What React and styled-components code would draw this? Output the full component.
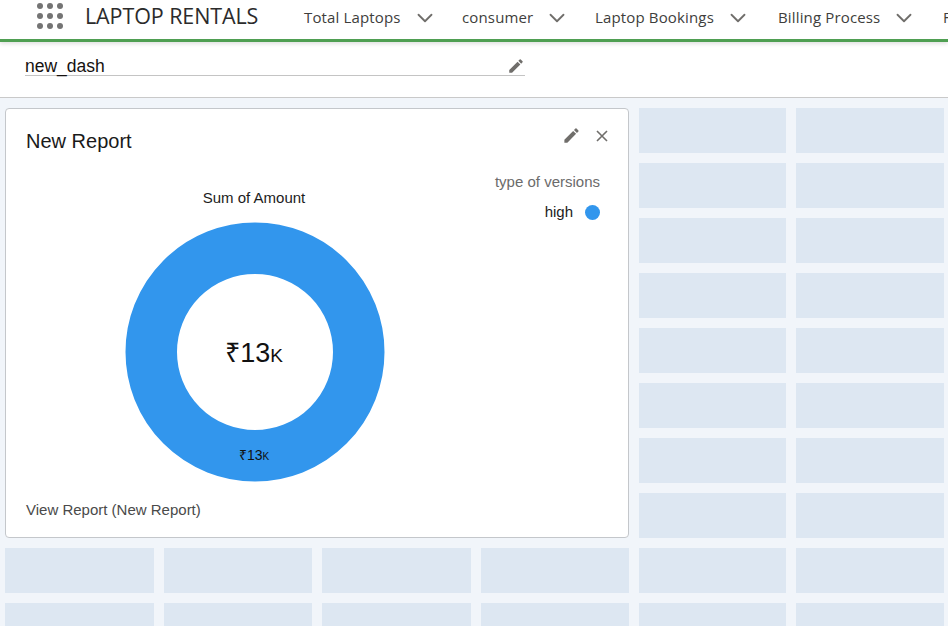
import React from 'react';
import styled, {createGlobalStyle} from 'styled-components';
import {ChevronDown} from 'lucide-react';

const GlobalStyle = createGlobalStyle`
    html, body {
        margin: 0;
        height: 100%;
        overflow: hidden;
        background: #fff;
        font-family: "Liberation Sans", Arial, sans-serif;
    }
`;

const Page = styled.div`
    width: 948px;
    height: 626px;
    overflow: hidden;
    display: flex;
    flex-direction: column;
`;

const Navbar = styled.header`
    height: 39px;
    flex: none;
    display: flex;
    align-items: center;
    padding-left: 37px;
    border-bottom: 3px solid #4f9f52;
    box-shadow: 0 2px 4px rgba(0, 0, 0, 0.12);
    white-space: nowrap;
    overflow: hidden;
    position: relative;
    font-family: "Open Sans", sans-serif;
`;

const Launcher = styled.div`
    display: grid;
    grid-template-columns: repeat(3, 6px);
    gap: 4px;
    margin-right: 22px;
    margin-top: -8px;
    span {
        width: 6px;
        height: 6px;
        border-radius: 50%;
        background: #747474;
    }
`;

const Brand = styled.div`
    font-size: 21.5px;
    color: #2b2b2b;
    margin-right: 28px;
    margin-top: -8px;
    width: 191px;
    flex: none;
    letter-spacing: -0.1px;
`;

const NavItem = styled.div`
    display: flex;
    align-items: center;
    flex: none;
    width: ${props => props.$width}px;
    margin-top: -5px;
    font-size: 15px;
    letter-spacing: 0.15px;
    color: #3e3e3c;
    svg {
        color: #706e6b;
        margin-left: 11px;
        margin-top: 1px;
    }
`;

const TitleBar = styled.div`
    height: 55px;
    flex: none;
    padding: 0 423px 0 25px;
    border-bottom: 1px solid #c9c9c9;
`;

const TitleField = styled.div`
    height: 34px;
    box-sizing: border-box;
    padding-top: 14px;
    display: flex;
    align-items: center;
    justify-content: space-between;
    border-bottom: 1px solid #c4c4c4;
    font-size: 17.5px;
    color: #16110f;
    line-height: 20px;
`;

const Canvas = styled.div`
    flex: 1;
    background: #f1f5fa;
    padding: 10px 0 0 5px;
    display: grid;
    grid-template-columns: repeat(4, 148.5px) 147px 148px;
    grid-auto-rows: 45px;
    column-gap: 10px;
    row-gap: 10px;
    overflow: hidden;
`;

const Slot = styled.div`
    background: #dde7f2;
`;

const Card = styled.section`
    grid-column: 1 / 5;
    grid-row: 1 / 9;
    background: #fff;
    border: 1px solid #c4c7cb;
    border-radius: 4px;
    padding: 20px 20px 19px;
    box-sizing: border-box;
    display: flex;
    flex-direction: column;
    position: relative;
`;

const CardTitle = styled.h2`
    margin: 0;
    font-size: 20px;
    line-height: 24px;
    font-weight: 400;
    color: #1a1a1a;
`;

const CardTools = styled.div`
    position: absolute;
    top: 17px;
    right: 20px;
    display: flex;
    align-items: center;
    gap: 15px;
`;

const CardBody = styled.div`
    flex: 1;
    display: flex;
    position: relative;
`;

const ChartArea = styled.div`
    width: 458px;
    display: flex;
    flex-direction: column;
    align-items: center;
    padding-top: 37px;
`;

const ChartTitle = styled.div`
    font-size: 15px;
    line-height: 16px;
    color: #1c1c1c;
    margin: 0 2px 15px 0;
`;

const Legend = styled.div`
    position: absolute;
    top: 21px;
    right: 8px;
    display: flex;
    flex-direction: column;
    align-items: flex-end;
    gap: 14px;
`;

const LegendTitle = styled.div`
    font-size: 15px;
    line-height: 16px;
    color: #6b6b6b;
`;

const LegendRow = styled.div`
    display: flex;
    align-items: center;
    gap: 12px;
    font-size: 15px;
    line-height: 16px;
    color: #1c1c1c;
`;

const Dot = styled.span`
    width: 15px;
    height: 15px;
    border-radius: 50%;
    background: ${props => props.$color};
`;

const CardLink = styled.a`
    font-size: 15px;
    line-height: 16px;
    color: #4a4a4a;
`;

const ChartLabel = styled.text`
    font-family: "Liberation Sans", Arial, sans-serif;
    font-variant: small-caps;
    text-anchor: middle;
    fill: #111;
`;

const PencilIcon = ({size = 18, color = '#706e6b'}) => (
    <svg width={size} height={size} viewBox="0 0 24 24" fill={color}>
        <path d="M3 17.25V21h3.75L17.81 9.94l-3.75-3.75L3 17.25zM20.71 7.04a1 1 0 0 0 0-1.41l-2.34-2.34a1 1 0 0 0-1.41 0l-1.83 1.83 3.75 3.75 1.83-1.83z" />
    </svg>
);

const CloseIcon = () => (
    <svg width="12" height="12" viewBox="0 0 12 12" stroke="#706e6b" strokeWidth="1.6" fill="none">
        <path d="M1 1l10 10M11 1L1 11" />
    </svg>
);

const menuItems = [
    {label: 'Total Laptops', width: 158},
    {label: 'consumer', width: 133},
    {label: 'Laptop Bookings', width: 183},
    {label: 'Billing Process', width: 165},
    {label: 'Feedback', width: 80},
];

const DonutChart = () => (
    <svg width="260" height="262" viewBox="0 0 260 262">
        <circle cx="130" cy="131" r="103.75" fill="none" stroke="#3296ed" strokeWidth="51.5" />
        <ChartLabel x="129" y="141" fontSize="27">₹13k</ChartLabel>
        <ChartLabel x="129" y="239" fontSize="14">₹13k</ChartLabel>
    </svg>
);

const App = () => {
    const slots = Array.from({length: 36})

    return (
        <Page>
            <GlobalStyle />
            <Navbar>
                <Launcher>
                    {Array.from({length: 9}).map((_, i) => <span key={i} />)}
                </Launcher>
                <Brand>LAPTOP RENTALS</Brand>
                {menuItems.map(item => (
                    <NavItem key={item.label} $width={item.width}>
                        <span>{item.label}</span>
                        <ChevronDown size={26} strokeWidth={1.7} />
                    </NavItem>
                ))}
            </Navbar>
            <TitleBar>
                <TitleField>
                    new_dash
                    <PencilIcon />
                </TitleField>
            </TitleBar>
            <Canvas>
                <Card>
                    <CardTitle>New Report</CardTitle>
                    <CardTools>
                        <PencilIcon size={19} />
                        <CloseIcon />
                    </CardTools>
                    <CardBody>
                        <ChartArea>
                            <ChartTitle>Sum of Amount</ChartTitle>
                            <DonutChart />
                        </ChartArea>
                        <Legend>
                            <LegendTitle>type of versions</LegendTitle>
                            <LegendRow>high <Dot $color="#3296ed" /></LegendRow>
                        </Legend>
                    </CardBody>
                    <CardLink>View Report (New Report)</CardLink>
                </Card>
                {slots.map((_, i) => <Slot key={i} />)}
            </Canvas>
        </Page>
    )
}

export default App;
